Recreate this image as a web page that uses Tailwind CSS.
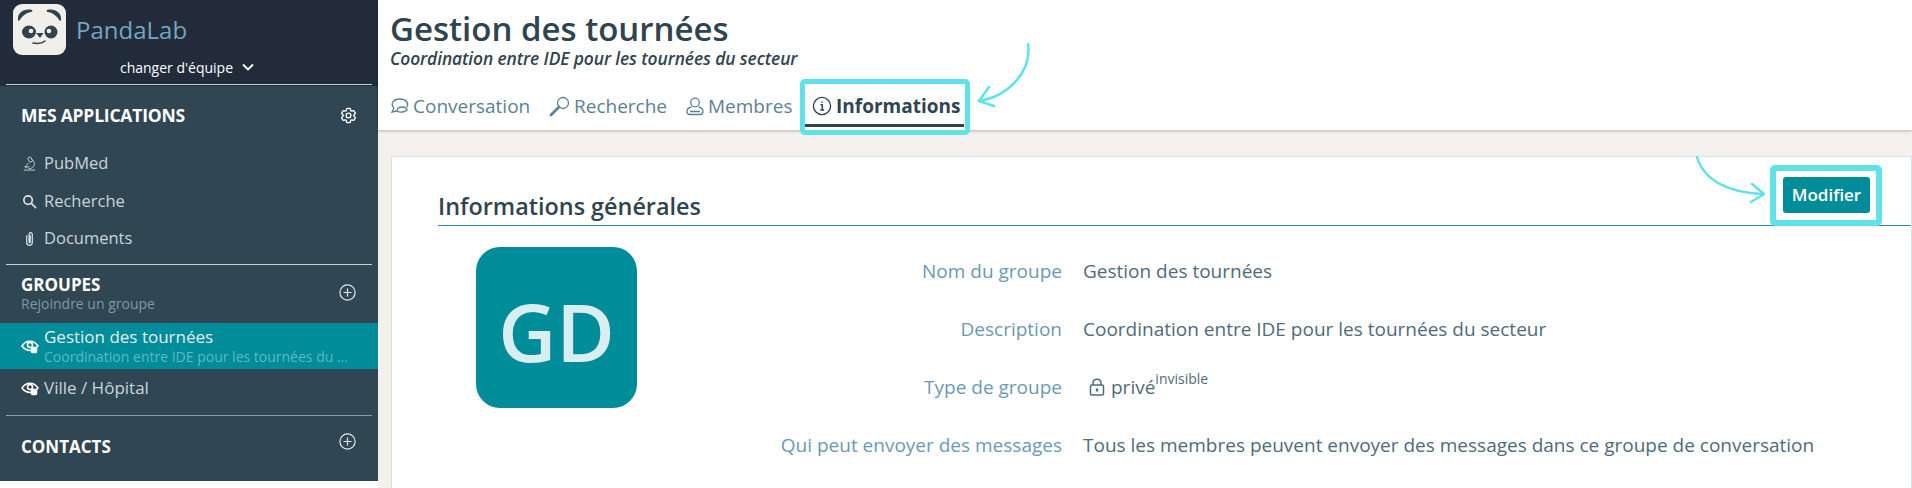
<!DOCTYPE html>
<html lang="fr">
<head>
<meta charset="UTF-8">
<title>Gestion des tournées</title>
<script src="https://cdn.jsdelivr.net/npm/@tailwindcss/browser@4"></script>
</head>
<body class="bg-white overflow-hidden font-['Open_Sans',sans-serif]">
<div class="relative flex w-[1912px] h-[488px] overflow-hidden">
  <!-- Sidebar -->
  <aside class="w-[378px] h-[481px] shrink-0 bg-[#304652] text-[#c9d5da]">
    <div class="h-[86px] bg-[#212b3a] px-[6px] flex flex-col">
      <div class="flex items-center h-[58px] pl-[7px] pt-[1px]">
        <svg class="w-[53px] h-[51px]" viewBox="0 0 53 51">
          <rect width="53" height="51" rx="9" fill="#f1efe9"/>
          <path d="M5 16C4 9 11 4 19 6 20 7 19 8 18 8 13 9 9 12 7 16 6 17 5 17 5 16Z" fill="#30444f"/>
          <path d="M48 16C49 9 42 4 34 6 33 7 34 8 35 8 40 9 44 12 46 16 47 17 48 17 48 16Z" fill="#30444f"/>
          <ellipse cx="16" cy="28" rx="7" ry="6.500" fill="#30444f"/>
          <ellipse cx="38" cy="28" rx="6.500" ry="6.500" fill="#30444f"/>
          <circle cx="18" cy="27" r="2.300" fill="#f1efe9"/>
          <circle cx="36" cy="27" r="2.300" fill="#f1efe9"/>
          <path d="M23 29H30.500L27 34Z" fill="#30444f"/>
          <path d="M20 39C25 40 29 39.500 32 37" fill="none" stroke="#30444f" stroke-width="1.600" stroke-linecap="round"/>
        </svg>
        <span class="ml-[10px] text-[24px] text-[#74a5c2] font-medium">PandaLab</span>
      </div>
      <div class="flex items-center justify-center gap-[9px] text-[14px] text-white h-[18px] pr-[4px]">
        <span>changer d'équipe</span>
        <svg class="w-[12px] h-[12px]" viewBox="0 0 12 12" fill="none" stroke="#fff" stroke-width="1.800"><path d="M1 3.500 6 8.500 11 3.500"/></svg>
      </div>
      <div class="mt-auto h-[1px] bg-[#c9ced3] mb-[1px]"></div>
    </div>

    <div class="flex items-center justify-between pl-[21px] pr-[20px] h-[58px]">
      <span class="text-[17.500px] font-bold text-white leading-[22px] tracking-[-0.2px]">MES APPLICATIONS</span>
      <svg class="w-[19px] h-[19px]" viewBox="0 0 24 24" fill="none" stroke="#fff" stroke-width="1.700"><path d="M9.594 3.94c.09-.542.56-.94 1.11-.94h2.593c.55 0 1.02.398 1.11.94l.213 1.281c.063.374.313.686.645.87.074.04.147.083.22.127.325.196.72.257 1.075.124l1.217-.456a1.125 1.125 0 0 1 1.37.49l1.296 2.247a1.125 1.125 0 0 1-.26 1.431l-1.003.827c-.293.241-.438.613-.43.992a7.723 7.723 0 0 1 0 .255c-.008.378.137.75.43.991l1.004.827c.424.35.534.955.26 1.43l-1.298 2.247a1.125 1.125 0 0 1-1.369.491l-1.217-.456c-.355-.133-.75-.072-1.076.124a6.47 6.47 0 0 1-.22.128c-.331.183-.581.495-.644.869l-.213 1.281c-.09.543-.56.94-1.11.94h-2.594c-.55 0-1.019-.398-1.11-.94l-.213-1.281c-.062-.374-.312-.686-.644-.87a6.52 6.52 0 0 1-.22-.127c-.325-.196-.72-.257-1.076-.124l-1.217.456a1.125 1.125 0 0 1-1.369-.49l-1.297-2.247a1.125 1.125 0 0 1 .26-1.431l1.004-.827c.292-.24.437-.613.43-.991a6.932 6.932 0 0 1 0-.255c.007-.38-.138-.751-.43-.992l-1.004-.827a1.125 1.125 0 0 1-.26-1.43l1.297-2.247a1.125 1.125 0 0 1 1.37-.491l1.216.456c.356.133.751.072 1.076-.124.072-.044.146-.086.22-.128.332-.183.582-.495.644-.869l.214-1.28Z"/><path d="M15 12a3 3 0 1 1-6 0 3 3 0 0 1 6 0Z"/></svg>
    </div>

    <div class="flex flex-col text-[16.500px]">
      <div class="flex items-center h-[38px] pl-[22px]">
        <svg class="w-[15px] h-[15px]" viewBox="0 0 16 16" fill="none" stroke="#c9d5da" stroke-width="1"><path d="M6 2.500 9 1 11.500 5 8.500 7ZM10 3.500C13 5 14 8 12.500 11 11 13 9 13.500 7 13.500M2 15H14M4.500 13C4 11 4.500 9 7 8M2.500 11.500H8"/></svg>
        <span class="ml-[7px]">PubMed</span>
      </div>
      <div class="flex items-center h-[38px] pl-[22px]">
        <svg class="w-[15px] h-[15px]" viewBox="0 0 16 16" fill="none" stroke="#d9e2e6" stroke-width="1.800"><circle cx="6.500" cy="6.500" r="4.500"/><path d="M10 10 15 15"/></svg>
        <span class="ml-[7px]">Recherche</span>
      </div>
      <div class="flex items-center h-[37px] pl-[22px]">
        <svg class="w-[15px] h-[16px]" viewBox="0 0 16 16" fill="none" stroke="#d9e2e6" stroke-width="1.300"><path d="M5 4V11.500C5 16 11 16 11 11.500V3.500C11 .5 7.500 .5 7.500 3.500V11C7.500 12.500 8.800 12.500 8.800 11V4"/></svg>
        <span class="ml-[7px]">Documents</span>
      </div>
    </div>

    <div class="mx-[6px] mt-[7px] h-[1px] bg-[#c9ced3]"></div>

    <div class="flex items-start justify-between pl-[21px] pr-[22px] h-[58px] pt-[9px]">
      <div class="flex flex-col">
        <span class="text-[17px] font-bold text-white leading-[21px]">GROUPES</span>
        <span class="text-[14px] text-[#7d98a6] leading-[17px]">Rejoindre un groupe</span>
      </div>
      <svg class="w-[17px] h-[17px] mt-[10px]" viewBox="0 0 17 17" fill="none" stroke="#e3e9ec" stroke-width="1.200"><circle cx="8.500" cy="8.500" r="7.600"/><path d="M8.500 4.500V12.500M4.500 8.500H12.500"/></svg>
    </div>

    <div class="flex items-center h-[46px] bg-[#008c99] pl-[21px] pr-[15px]">
      <svg class="w-[18px] h-[16px] shrink-0" viewBox="0 0 18 16" fill="none" stroke="#fff" stroke-width="1.500"><path d="M1 8C5 1.500 13 1.500 17 8 15.500 10 14 11 12 12 8 13 4 12 1 8Z"/><circle cx="9" cy="7" r="2.500"/><rect x="10.500" y="9.500" width="5" height="5" rx="1" fill="#fff"/></svg>
      <div class="ml-[5px] flex flex-col min-w-0 pb-[1px] whitespace-nowrap">
        <span class="text-[17px] leading-[22px] text-[#e3eff1]">Gestion des tournées</span>
        <span class="text-[14px] leading-[18px] text-[#5fb8c2]">Coordination entre IDE pour les tournées du ...</span>
      </div>
    </div>

    <div class="flex items-center h-[38px] pl-[21px]">
      <svg class="w-[18px] h-[16px] shrink-0" viewBox="0 0 18 16" fill="none" stroke="#fff" stroke-width="1.500"><path d="M1 8C5 1.500 13 1.500 17 8 15.500 10 14 11 12 12 8 13 4 12 1 8Z"/><circle cx="9" cy="7" r="2.500"/><rect x="10.500" y="9.500" width="5" height="5" rx="1" fill="#fff"/></svg>
      <span class="ml-[5px] text-[17px]">Ville / Hôpital</span>
    </div>

    <div class="mx-[6px] mt-[8px] h-[1px] bg-[#8f9da5]"></div>

    <div class="flex items-start justify-between pl-[21px] pr-[22px] pt-[20px]">
      <span class="text-[17px] font-bold text-white leading-[22px]">CONTACTS</span>
      <svg class="w-[17px] h-[17px] mt-[-3px]" viewBox="0 0 17 17" fill="none" stroke="#e3e9ec" stroke-width="1.200"><circle cx="8.500" cy="8.500" r="7.600"/><path d="M8.500 4.500V12.500M4.500 8.500H12.500"/></svg>
    </div>
  </aside>

  <!-- Main -->
  <main class="flex-1 flex flex-col min-w-0">
    <header class="h-[130px] shrink-0 bg-white shadow-[0_1px_3px_rgba(0,0,0,0.25)] pl-[12px] relative">
      <h1 class="text-[33px] leading-[40px] font-semibold text-[#30444f] pt-[9px] h-[49px]">Gestion des tournées</h1>
      <p class="text-[17.400px] leading-[18px] italic font-semibold text-[#30444f] tracking-[-0.1px]">Coordination entre IDE pour les tournées du secteur</p>
      <nav class="flex items-center text-[#5b8196] text-[19px] h-[56px] mt-[11px]">
        <div class="flex items-center w-[159px]">
          <svg class="w-[20px] h-[18px] shrink-0" viewBox="0 0 20 18" fill="none" stroke="#5b8196" stroke-width="1.300"><path d="M4 11C0 7 3 2 10 2c6 0 9 4 7 8M4 11 2 15 7 14M7 14c3 2 8 1 10-1 0-2-2-3-5-3s-5 1-5 4Z"/></svg>
          <span class="ml-[3px]">Conversation</span>
        </div>
        <div class="flex items-center w-[136px]">
          <svg class="w-[22px] h-[22px] shrink-0" viewBox="0 0 22 22" fill="none" stroke="#5b8196"><circle cx="14" cy="8" r="5.500" stroke-width="1.300"/><path d="M10 12 2 20" stroke-width="2.800" stroke-linecap="round"/></svg>
          <span class="ml-[3px]">Recherche</span>
        </div>
        <div class="flex items-center w-[127px]">
          <svg class="w-[20px] h-[19px] shrink-0" viewBox="0 0 20 19" fill="none" stroke="#5b8196" stroke-width="1.300"><circle cx="10" cy="5.500" r="4.300"/><path d="M6.500 10C3.500 10.500 2 12.500 2 14.500 2 16.500 3 17.500 5 17.500H15C17 17.500 18 16.500 18 14.500 18 12.500 16.500 10.500 13.500 10M5 14.500H15"/></svg>
          <span class="ml-[3px]">Membres</span>
        </div>
        <div class="flex items-center">
          <svg class="w-[20px] h-[20px] shrink-0" viewBox="0 0 20 20" fill="none" stroke="#30444f" stroke-width="1.300"><circle cx="10" cy="10" r="8.600"/><path d="M8.500 8.800H10.300V14M8.300 14H12.200M10 5.400V6.800" stroke-width="1.500"/></svg>
          <span class="ml-[4px] font-bold text-[#30444f]">Informations</span>
        </div>
      </nav>
      <div class="absolute left-[427px] top-[124px] w-[159px] h-[3px] bg-[#30444f]"></div>
    </header>

    <div class="flex-1 bg-[#f3f0ee] pt-[26px] pl-[13px] min-h-0">
      <section class="h-[340px] bg-white border border-[#d5e6ea] pl-[46px] pt-[33px]">
        <h2 class="text-[23.400px] leading-[32px] font-semibold text-[#30444f] h-[36px] border-b border-[#2a8f9a]">Informations générales</h2>
        <div class="flex pt-[21px]">
          <div class="w-[161px] h-[161px] ml-[38px] shrink-0 rounded-[24px] bg-[#008c99] flex items-center justify-center text-[#d9eef0] text-[80px] font-semibold pt-[6px]">GD</div>
          <div class="flex flex-col text-[19px]">
            <div class="flex items-center h-[58px] mt-[-5px]"><span class="w-[425px] text-right text-[#6b9ab3]">Nom du groupe</span><span class="ml-[21px] text-[#4e6b7c]">Gestion des tournées</span></div>
            <div class="flex items-center h-[58px]"><span class="w-[425px] text-right text-[#6b9ab3]">Description</span><span class="ml-[21px] text-[#4e6b7c]">Coordination entre IDE pour les tournées du secteur</span></div>
            <div class="flex items-center h-[58px]">
              <span class="w-[425px] text-right text-[#6b9ab3]">Type de groupe</span>
              <svg class="ml-[27px] w-[16px] h-[18px]" viewBox="0 0 16 18" fill="none" stroke="#4e6b7c" stroke-width="1.500"><rect x="1.500" y="7" width="13" height="10" rx="1.500"/><path d="M4 7V5C4 0 12 0 12 5V7"/><rect x="6.800" y="10.500" width="2.400" height="3" fill="#4e6b7c" stroke="none"/></svg>
              <span class="ml-[6px] text-[#4e6b7c]">privé</span><span class="text-[14px] text-[#4e6b7c] self-start mt-[10px]">invisible</span>
            </div>
            <div class="flex items-center h-[58px]"><span class="w-[425px] text-right text-[#6b9ab3] whitespace-nowrap">Qui peut envoyer des messages</span><span class="ml-[21px] text-[#4e6b7c] whitespace-nowrap">Tous les membres peuvent envoyer des messages dans ce groupe de conversation</span></div>
          </div>
        </div>
      </section>
    </div>
  </main>

  <!-- Button and annotations over the page -->
  <button class="absolute left-[1783px] top-[177px] w-[87px] h-[36px] rounded-[3px] bg-[#008c99] text-white text-[17px] font-semibold">Modifier</button>
  <div class="absolute left-[1770px] top-[165px] w-[112px] h-[61px] border-[6px] border-[#5fe2e8] rounded-[5px]"></div>
  <div class="absolute left-[800px] top-[79px] w-[170px] h-[56px] border-[5px] border-[#5fe2e8] rounded-[5px]"></div>
  <svg class="absolute left-[970px] top-[40px] w-[70px] h-[70px]" viewBox="0 0 70 70" fill="none" stroke="#5fe2e8" stroke-width="2.500" stroke-linecap="round" stroke-linejoin="round"><path d="M58 4C62 30 40 56 9 61"/><path d="M19 47 9 61 24 66"/></svg>
  <svg class="absolute left-[1690px] top-[155px] w-[80px] h-[50px]" viewBox="0 0 80 50" fill="none" stroke="#5fe2e8" stroke-width="2.500" stroke-linecap="round" stroke-linejoin="round"><path d="M7 2C14 26 40 38 73 39"/><path d="M62 29 74 39 61 47"/></svg>
</div>
</body>
</html>
